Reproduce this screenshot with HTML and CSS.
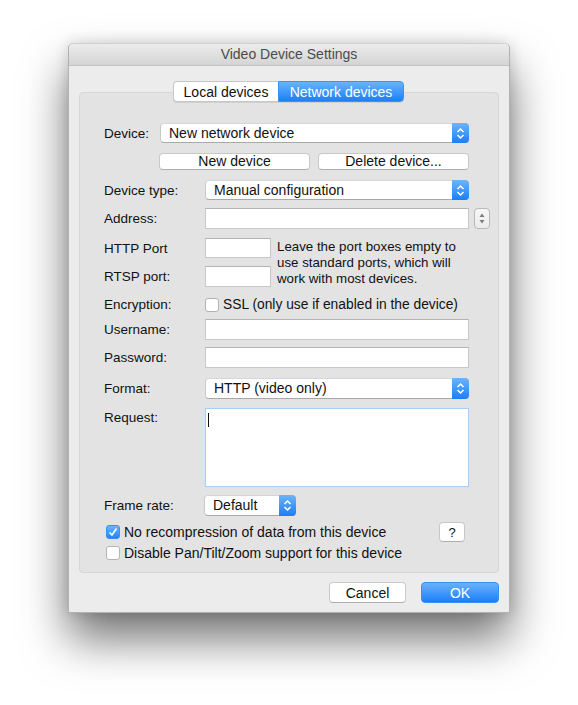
FILE: index.html
```html
<!DOCTYPE html>
<html lang="en">
<head>
    <meta charset="UTF-8">
    <title>Video Device Settings</title>
    <link rel="stylesheet" href="styles.css">
</head>
<body>
<div class="desktop">
    <div class="window">
        <div class="titlebar">Video Device Settings</div>
        <div class="content">
            <div class="tabs">
                <span class="tab">Local devices</span>
                <span class="tab active">Network devices</span>
            </div>

            <div class="tabbox">
                <div class="row">
                    <span class="label short">Device:</span>
                    <div class="popup"><span class="popup-text">New network device</span><span class="popup-cap"><svg width="9" height="13" viewBox="0 0 9 13"><path d="M1.5 5 L4.5 2 L7.5 5 M1.5 8 L4.5 11 L7.5 8" fill="none" stroke="#fff" stroke-width="1.5"/></svg></span></div>
                </div>

                <div class="row btn-row mt2">
                    <span class="label short"></span>
                    <button class="btn">New device</button>
                    <button class="btn">Delete device...</button>
                </div>

                <div class="row mt2">
                    <span class="label">Device type:</span>
                    <div class="popup"><span class="popup-text">Manual configuration</span><span class="popup-cap"><svg width="9" height="13" viewBox="0 0 9 13"><path d="M1.5 5 L4.5 2 L7.5 5 M1.5 8 L4.5 11 L7.5 8" fill="none" stroke="#fff" stroke-width="1.5"/></svg></span></div>
                </div>

                <div class="row tall">
                    <span class="label">Address:</span>
                    <div class="field address"></div>
                    <div class="stepper"><svg width="16" height="21" viewBox="0 0 16 21"><path d="M8 5.5 L10.5 9 L5.5 9 Z M8 15.5 L10.5 12 L5.5 12 Z" fill="#7d7d7d"/></svg></div>
                </div>

                <div class="ports mt1">
                    <span class="label">HTTP Port</span>
                    <div class="field"></div>
                    <p class="hint">Leave the port boxes empty to use standard ports, which will work with most devices.</p>
                    <span class="label">RTSP port:</span>
                    <div class="field"></div>
                </div>

                <div class="row small mt3">
                    <span class="label">Encryption:</span>
                    <span class="checkbox"></span>
                    <span class="check-text ssl">SSL (only use if enabled in the device)</span>
                </div>

                <div class="row tall">
                    <span class="label">Username:</span>
                    <div class="field"></div>
                </div>

                <div class="row tall mtn1">
                    <span class="label">Password:</span>
                    <div class="field"></div>
                </div>

                <div class="row tall mt2">
                    <span class="label">Format:</span>
                    <div class="popup"><span class="popup-text">HTTP (video only)</span><span class="popup-cap"><svg width="9" height="13" viewBox="0 0 9 13"><path d="M1.5 5 L4.5 2 L7.5 5 M1.5 8 L4.5 11 L7.5 8" fill="none" stroke="#fff" stroke-width="1.5"/></svg></span></div>
                </div>

                <div class="row request mt1">
                    <span class="label">Request:</span>
                    <div class="textarea"><span class="caret"></span></div>
                </div>

                <div class="row tall">
                    <span class="label">Frame rate:</span>
                    <div class="popup narrow"><span class="popup-text">Default</span><span class="popup-cap"><svg width="9" height="13" viewBox="0 0 9 13"><path d="M1.5 5 L4.5 2 L7.5 5 M1.5 8 L4.5 11 L7.5 8" fill="none" stroke="#fff" stroke-width="1.5"/></svg></span></div>
                </div>

                <div class="row check-row mt1">
                    <span class="checkbox checked"><svg width="14" height="14" viewBox="0 0 14 14"><path d="M3.5 7.5 L6 10 L10.5 3.5" fill="none" stroke="#fff" stroke-width="1.6"/></svg></span>
                    <span class="check-text">No recompression of data from this device</span>
                    <button class="btn help">?</button>
                </div>

                <div class="row check-row mtn1">
                    <span class="checkbox"></span>
                    <span class="check-text">Disable Pan/Tilt/Zoom support for this device</span>
                </div>
            </div>

            <div class="footer">
                <button class="btn dialog">Cancel</button>
                <button class="btn dialog default">OK</button>
            </div>
        </div>
    </div>
</div>
</body>
</html>
```

FILE: styles.css
```css
body {
    margin: 0;
    background: #fff;
    font-family: "Liberation Sans", Arial, sans-serif;
    font-size: 14px;
    color: #111;
}
.desktop {
    height: 705px;
    box-sizing: border-box;
    padding: 43px 0 0 68px;
}
.window {
    width: 442px;
    height: 570px;
    box-sizing: border-box;
    background: #ececec;
    border: 1px solid #b2b2b2;
    border-top-color: #cfcfcf;
    border-radius: 5px 5px 0 0;
    box-shadow: 0 26px 46px rgba(0, 0, 0, 0.55), 0 0 14px rgba(0, 0, 0, 0.14);
}
.titlebar {
    height: 21px;
    line-height: 21px;
    text-align: center;
    color: #4b4b4b;
    background: linear-gradient(#ececec, #d4d4d4);
    border-bottom: 1px solid #c1c1c1;
    border-radius: 5px 5px 0 0;
}
.content {
    padding: 15px 10px 9px 10px;
}
.tabs {
    position: relative;
    z-index: 1;
    display: flex;
    justify-content: center;
    height: 21px;
    margin-left: -1px;
}
.tab {
    box-sizing: border-box;
    width: 105px;
    height: 21px;
    line-height: 20px;
    text-align: center;
    background: #fff;
    border: 1px solid #c6c6c6;
    border-right: none;
    border-radius: 4px 0 0 4px;
    box-shadow: 0 1px 0 rgba(0, 0, 0, 0.08);
}
.tab.active {
    width: 126px;
    color: #fff;
    background: linear-gradient(#6ab2fb, #1b80f8);
    border: 1px solid #3c92f2;
    border-radius: 0 4px 4px 0;
}
.tabbox {
    margin-top: -10px;
    padding: 30px 29px 12px 24px;
    background: #e3e3e3;
    border: 1px solid #d7d7d7;
    border-radius: 4px;
    display: flex;
    flex-direction: column;
    gap: 8px;
}
.row {
    display: flex;
    align-items: center;
    height: 20px;
}
.row.tall {
    height: 21px;
}
.row.small {
    height: 13px;
}
.btn-row {
    height: 17px;
    gap: 8px;
}
.mt1 { margin-top: 1px; }
.mt2 { margin-top: 2px; }
.mt3 { margin-top: 3px; }
.mtn1 { margin-top: -1px; }
.label {
    flex: none;
    width: 101px;
    font-size: 13.5px;
}
.label.short {
    width: 56px;
}
.popup {
    flex: 1;
    display: flex;
    height: 100%;
    box-sizing: border-box;
    background: #fff;
    border: 1px solid #c9c9c9;
    border-top-color: #d6d6d6;
    border-bottom-color: #a9a9a9;
    border-radius: 4px;
}
.popup.narrow {
    flex: none;
    width: 92px;
    margin-left: -1px;
}
.popup-text {
    flex: 1;
    padding-left: 8px;
    line-height: 18px;
}
.popup-cap {
    width: 17px;
    margin: -1px -1px -1px 0;
    display: flex;
    align-items: center;
    justify-content: center;
    background: linear-gradient(#6db4fb, #1a7ff7);
    border-radius: 0 4px 4px 0;
}
.field {
    flex: 1;
    height: 100%;
    box-sizing: border-box;
    background: #fff;
    border: 1px solid #c8c8c8;
    border-top-color: #b4b4b4;
}
.field.address {
    flex: none;
    width: 264px;
}
.stepper {
    flex: none;
    width: 16px;
    height: 21px;
    margin-left: 5px;
    margin-right: -21px;
    box-sizing: border-box;
    border: 1px solid #b9b9b9;
    border-radius: 4px;
    background: linear-gradient(#f7f7f7, #ececec);
}
.stepper svg {
    display: block;
    margin: -1px;
}
.btn {
    font-family: inherit;
    font-size: 14px;
    color: #111;
    background: #fff;
    border: 1px solid #c8c8c8;
    border-bottom-color: #aeaeae;
    border-radius: 4px;
    padding: 0;
}
.btn-row .btn {
    flex: 1;
    height: 17px;
    line-height: 15px;
}
.btn-row .label {
    width: 47px;
}
.ports {
    display: grid;
    grid-template-columns: 101px 66px 1fr;
    grid-template-rows: 20px 21px;
    row-gap: 8px;
    align-items: center;
}
.ports .field {
    height: 100%;
}
.hint {
    grid-column: 3;
    grid-row: 1 / 3;
    align-self: start;
    margin: 0;
    padding: 1px 0 0 6px;
    font-size: 13.3px;
    line-height: 16px;
}
.checkbox {
    flex: none;
    width: 14px;
    height: 14px;
    box-sizing: border-box;
    background: #fff;
    border: 1px solid #b3b3b3;
    border-radius: 3px;
}
.checkbox.checked {
    background: linear-gradient(#6cb3fb, #2384f7);
    border-color: #3a8ff0;
}
.checkbox.checked svg {
    display: block;
    margin: -1px;
}
.check-text {
    margin-left: 4px;
}
.check-text.ssl {
    font-size: 13.8px;
}
.check-row {
    height: 14px;
    padding-left: 2px;
}
.btn.help {
    width: 26px;
    height: 20px;
    margin-left: auto;
    margin-right: 4px;
    font-size: 13px;
}
.request {
    height: 79px;
    align-items: flex-start;
}
.request .label {
    margin-top: 2px;
}
.textarea {
    flex: 1;
    height: 100%;
    box-sizing: border-box;
    background: #fff;
    border: 1px solid #a9cdf5;
    box-shadow: 0 0 0 1px #d2e5fa;
    padding: 4px 0 0 2px;
}
.caret {
    display: block;
    width: 1px;
    height: 14px;
    background: #111;
}
.footer {
    display: flex;
    justify-content: flex-end;
    gap: 15px;
    margin-top: 9px;
}
.btn.dialog {
    width: 77px;
    height: 21px;
}
.btn.dialog.default {
    width: 78px;
    color: #fff;
    background: linear-gradient(#6ab2fb, #1a7ff7);
    border: 1px solid #3b8ff0;
}
```
